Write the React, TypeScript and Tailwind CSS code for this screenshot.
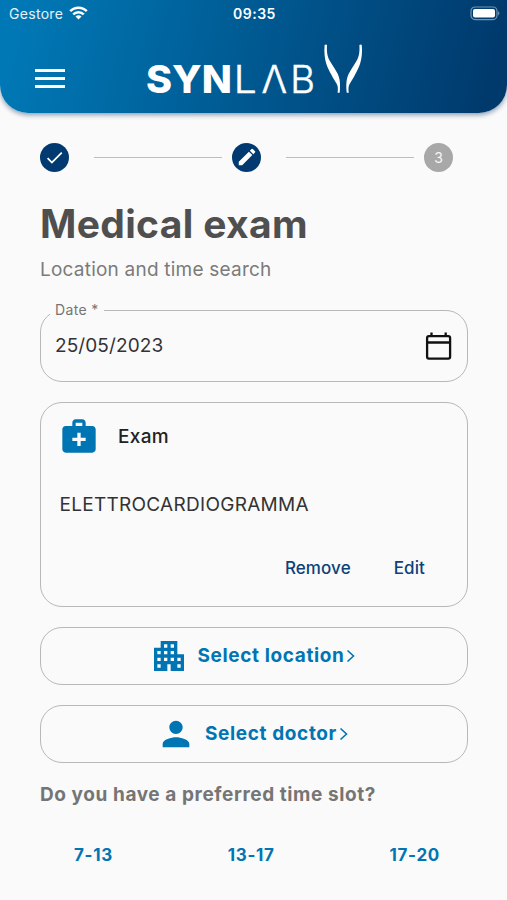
import React from "react";
import { MdApartment, MdCheck, MdEdit, MdMedicalServices, MdPerson } from "react-icons/md";

const slots = ["7-13", "13-17", "17-20"];

const actions = [
  { label: "Select location", icon: MdApartment },
  { label: "Select doctor", icon: MdPerson },
];

function StatusBar() {
  return (
    <div className="grid h-7 grid-cols-3 items-center pl-[9px] pr-[7px] text-[14px] leading-7">
      <div className="flex items-center gap-[6px]">
        <span className="tracking-[0.3px] text-white/90">Gestore</span>
        <svg className="mb-[2px]" width="19" height="14" viewBox="0 0 19 14" fill="none" stroke="white" strokeWidth="2.4">
          <path d="M1.2 5.2a11.7 11.7 0 0 1 16.6 0" />
          <path d="M4.2 8.4a7.5 7.5 0 0 1 10.6 0" />
          <path d="M9.5 13.6 6.5 10.6a4.2 4.2 0 0 1 6 0Z" fill="white" stroke="none" />
        </svg>
      </div>
      <span className="text-center font-semibold tracking-[0.5px]">09:35</span>
      <svg className="mb-[2px] justify-self-end" width="30" height="15" viewBox="0 0 30 15">
        <rect x="1" y="1" width="26" height="12.6" rx="4" fill="none" stroke="white" strokeOpacity="0.45" strokeWidth="1.2" />
        <rect x="3" y="3" width="22" height="8.6" rx="2" fill="white" />
        <path d="M28.2 5.2v4.2c1.6-.7 1.6-3.5 0-4.2Z" fill="white" fillOpacity="0.5" />
      </svg>
    </div>
  );
}

function Logo() {
  return (
    <svg className="ml-[80px]" width="222" height="64" viewBox="145 42 222 64" fill="white">
      <text x="146" y="93" fontFamily="Inter, sans-serif" fontSize="38.5" fontWeight="800" textLength="86" lengthAdjust="spacingAndGlyphs">SYN</text>
      <g fontFamily="Inter, sans-serif" fontSize="38" fontWeight="300" stroke="white" strokeWidth="0.5">
        <text x="233.8" y="93" textLength="23" lengthAdjust="spacingAndGlyphs">L</text>
        <text x="261.5" y="93">Λ</text>
        <text x="290.3" y="93">B</text>
      </g>
      <path d="M324.6 45Q325.8 43.8 327 45C326.500 54 327.800 58 331.300 63.300C333.500 67 335 69 336.500 71.700C339.500 76.500 340.800 82 339.700 92.800H337.600C338.300 87.500 337.600 85.500 336.300 83.300C334.500 80 333 78 331.300 74.500C328 68.500 323.300 61 324.600 45Z" />
      <path d="M361.800 45Q360.600 43.800 359.400 45C359.900 54 358.600 58 355.100 63.300C352.900 67 351.400 69 349.900 71.700C346.900 76.500 345.600 82 346.700 92.800H348.800C348.100 87.500 348.800 85.500 350.100 83.300C351.900 80 353.400 78 355.100 74.500C358.400 68.500 363.100 61 361.800 45Z" />
    </svg>
  );
}

function Header() {
  return (
    <header className="h-[113px] rounded-b-[28px] bg-linear-[105deg,#0078b5_5%,#003a6d_95%] text-white shadow-[0_2px_5px_rgba(0,40,90,0.45)]">
      <StatusBar />
      <div className="flex items-start pl-[35px] pt-[14px]">
        <div className="mt-[27px] flex w-[30px] flex-col gap-[5px]">
          <div className="h-[3px] bg-white" />
          <div className="h-[3px] bg-white" />
          <div className="h-[3px] bg-white" />
        </div>
        <Logo />
      </div>
    </header>
  );
}

function Steps() {
  return (
    <div className="flex h-[30px] items-center">
      <div className="flex size-[29px] items-center justify-center rounded-full bg-[#003a70] text-white">
        <MdCheck size={21} />
      </div>
      <div className="ml-[25px] mr-[10px] h-px w-32 bg-[#bdbdbd]" />
      <div className="flex size-[29px] items-center justify-center rounded-full bg-[#003a70] text-white">
        <MdEdit size={22} />
      </div>
      <div className="ml-[25px] mr-[10px] h-px w-32 bg-[#bdbdbd]" />
      <div className="flex size-[29px] items-center justify-center rounded-full bg-[#a8a8a8] text-[14px] text-white/90">
        3
      </div>
    </div>
  );
}

export default function App() {
  return (
    <div className="h-[900px] w-[507px] overflow-hidden bg-[#fafafa] font-[Inter,sans-serif]">
      <Header />
      <main className="w-[468px] pl-10 pt-[29px]">
        <Steps />
        <h1 className="mt-[27px] whitespace-nowrap text-[39px] font-bold leading-[50px] tracking-[0.35px] text-[#4f4f4f]">
          Medical exam
        </h1>
        <p className="mt-2 text-[19px] leading-[26px] tracking-[0.22px] text-[#7b7b7b]">
          Location and time search
        </p>

        <fieldset className="mt-[18px] h-[81px] rounded-[22px] border-[1.5px] border-[#b8b8b8] pl-[9px] pr-[14px]">
          <legend className="h-[18px] px-[5px] text-[14px] leading-[18px] tracking-[0.35px] text-[#757575]">Date *</legend>
          <div className="flex items-center justify-between pl-[5px] pt-[11px]">
            <span className="text-[19px] leading-8 tracking-[0.1px] text-[#333]">25/05/2023</span>
            <svg width="28" height="30" viewBox="0 0 28 30" fill="none" stroke="#111" strokeWidth="2.3">
              <rect x="2.1" y="5.1" width="23" height="22.5" rx="1.8" />
              <path d="M2 11.5h23M6.5 1.5v3.5M20.7 1.5v3.5" />
            </svg>
          </div>
        </fieldset>

        <section className="mt-5 h-[205px] rounded-[22px] border-[1.5px] border-[#b8b8b8]">
          <div className="flex items-center pl-[18px] pt-3">
            <MdMedicalServices size={40} className="text-[#0075b4]" />
            <span className="ml-[19px] mt-[2px] text-[19px] font-medium leading-10 tracking-[0.3px] text-[#222]">Exam</span>
          </div>
          <p className="ml-[18.5px] mt-[35px] text-[19px] leading-[26px] tracking-[0.28px] text-[#333]">ELETTROCARDIOGRAMMA</p>
          <div className="mr-[42px] mt-[37px] flex justify-end gap-[43px] text-[17px] font-medium leading-[26px] tracking-[0.1px] text-[#0d427b]">
            <span>Remove</span>
            <span>Edit</span>
          </div>
        </section>

        {actions.map(({ label, icon: Icon }) => (
          <button
            key={label}
            className="mt-5 flex h-[58px] w-full items-center justify-center rounded-[22px] border-[1.5px] border-[#b8b8b8] text-[#0075b4]"
          >
            <Icon size={40} />
            <span className="ml-[9px] pt-px text-[19px] font-bold tracking-[0.62px]">{label}</span>
            <svg className="ml-[2px] mr-[3px]" width="10" height="14" viewBox="0 0 10 14" fill="none" stroke="currentColor" strokeWidth="1.6">
              <path d="M1.5 1.5 7.5 7 1.5 12.5" />
            </svg>
          </button>
        ))}

        <p className="mt-[19px] whitespace-nowrap text-[19px] font-bold leading-[26px] tracking-[0.58px] text-[#757575]">
          Do you have a preferred time slot?
        </p>
        <div className="mt-[34px] flex justify-between pl-[34px] pr-7 text-[17px] font-bold leading-[26px] tracking-[0.7px] text-[#0075b4]">
          {slots.map((slot) => (
            <span key={slot}>{slot}</span>
          ))}
        </div>
      </main>
    </div>
  );
}
